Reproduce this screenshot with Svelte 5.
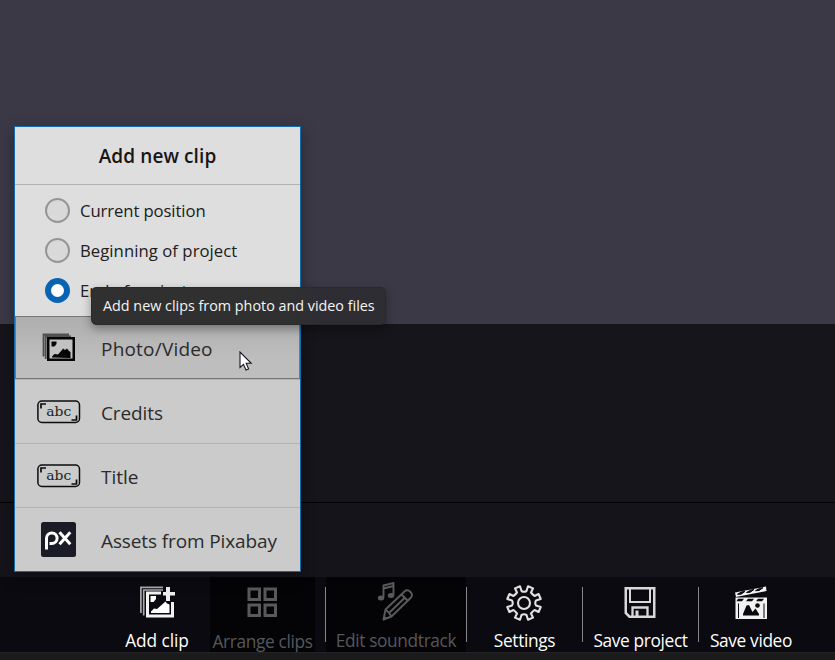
<script>
  const positions = [
    { label: 'Current position', cls: 'current' },
    { label: 'Beginning of project', cls: 'begin' },
    { label: 'End of project', cls: 'end' }
  ];
  let selected = $state(2);

  const sources = [
    { label: 'Photo/Video', icon: 'photo' },
    { label: 'Credits', icon: 'abc' },
    { label: 'Title', icon: 'abc' },
    { label: 'Assets from Pixabay', icon: 'px' }
  ];
</script>

<div class="app">
  <div class="preview"></div>
  <div class="timeline"></div>
  <div class="track"></div>

  <nav class="toolbar">
    <button class="tool add">
      <svg width="36" height="34" viewBox="0 0 36 34">
        <path d="M1.900 28V2.300H24M4.700 30.500V5H24" fill="none" stroke="#a8a8a8" stroke-width="1.700" />
        <path d="M7 6.500H22V9.500H10V29.500H32V17H35V32.500H7Z" fill="#f2f2f2" />
        <path d="M11.500 11h5.500v3l-2.500 3h-3zM12 28v-1.500l3-3 3 .5 8.500-7.500 1.500 2 2.500 1v8.500z" fill="#fff" />
        <path d="M24 7h3V2h4v5h5v3.500h-5v5.500h-4v-5.500h-3z" fill="#eee" />
      </svg>
      <span class="t-add">Add clip</span>
    </button>
    <button class="tool arrange" disabled>
      <svg width="36" height="34" viewBox="0 0 36 34">
        <g fill="none" stroke="#59595c" stroke-width="3">
          <rect x="4" y="4" width="10.500" height="10.500" /><rect x="20" y="4" width="10.500" height="10.500" />
          <rect x="4" y="20" width="10.500" height="10.500" /><rect x="20" y="20" width="10.500" height="10.500" />
        </g>
      </svg>
      <span class="t-arrange">Arrange clips</span>
    </button>
    <i class="sep"></i>
    <button class="tool edit" disabled>
      <svg width="38" height="41" viewBox="0 0 38 41">
        <g fill="none" stroke="#5a5a5d" stroke-width="1.900" stroke-linejoin="round">
          <path d="M6.500 16.500V4.500L16.500 2V14M6.500 7.500L16.500 5" />
          <path d="M8.500 28.500L27.500 10.500Q30.500 8 33.500 11T33.500 17L14.500 35.500L6.500 38.500ZM8.500 28.500Q12 31 14.500 35.500M24.500 13.500L30.500 19.500M12.500 31.500L27.500 17" />
        </g>
        <g fill="#5a5a5d"><ellipse cx="4" cy="17" rx="3.200" ry="2.500" /><ellipse cx="14" cy="14.500" rx="3.200" ry="2.500" /><path d="M6 39.500l1-5 3.500 3z" /></g>
      </svg>
      <span class="t-edit">Edit soundtrack</span>
    </button>
    <i class="sep"></i>
    <button class="tool settings">
      <svg width="36" height="36" viewBox="-18 -18 36 36">
        <g fill="none" stroke="#e2e2e2" stroke-width="2.100" stroke-linejoin="round">
          <path d="M-2.500-12Q0-10.500 2.500-12L4-16.700 9-14.600 7-10.500Q8.500-8.500 10.500-7L14.600-9 16.700-4 12-2.500Q10.500 0 12 2.500L16.700 4 14.600 9 10.500 7Q8.500 8.500 7 10.500L9 14.600 4 16.700 2.500 12Q0 10.500-2.500 12L-4 16.700-9 14.600-7 10.500Q-8.500 8.500-10.500 7L-14.600 9-16.700 4-12 2.500Q-10.500 0-12-2.500L-16.700-4-14.600-9-10.500-7Q-8.500-8.500-7-10.500L-9-14.600-4-16.700Z" />
          <circle r="6" />
        </g>
      </svg>
      <span class="t-settings">Settings</span>
    </button>
    <i class="sep"></i>
    <button class="tool saveproject">
      <svg width="36" height="34" viewBox="0 0 36 34">
        <g fill="none" stroke="#d8d8d8" stroke-width="2.500">
          <path d="M3.750 3.250H32.250V31.750H7.500L3.750 28Z" />
          <path d="M8 3V17H28V3" stroke-width="2" />
          <path d="M10.500 32V22.500H25.500V32" stroke-width="2.300" />
          <path d="M15 25.500V32" stroke-width="3" />
        </g>
      </svg>
      <span class="t-saveproject">Save project</span>
    </button>
    <i class="sep"></i>
    <button class="tool savevideo">
      <svg width="36" height="36" viewBox="0 0 36 36">
        <path d="M2 7.500L33 1.500L33.500 6L3 12Z" fill="#f2f2f2" />
        <path d="M4.500 9.200l4-2.300 3.500-.5-4 2.800zM13.500 7.500l4-2.300 3.500-.7-4 2.800zM22.500 5.700l4-2.300 3.500-.7-4 2.800z" fill="#09090e" stroke="#09090e" />
        <path d="M2.500 12.500H34V34H2.500Z" fill="#f2f2f2" />
        <path d="M5 13.800h6l-2 2.500H3.500zM15 13.800h6l-2 2.500h-6zM25 13.800h6l-2 2.500h-6z" fill="#09090e" />
        <path d="M5.500 18.500V33M31 18.500V33" stroke="#09090e" />
        <path d="M10 30.500V29l3.500-8.500 2.500-.5 3.500 7 3-3.500 3.500 5.500v1.500z" fill="#09090e" />
        <circle cx="24.500" cy="20.500" r="2.300" fill="#09090e" />
      </svg>
      <span class="t-savevideo">Save video</span>
    </button>
  </nav>
  <div class="statusbar"></div>

  <section class="panel">
    <h2><span>Add new clip</span></h2>
    <div class="radios">
      {#each positions as p, i}
        <label>
          <input type="radio" name="position" value={i} bind:group={selected} />
          <span class="dot"></span>
          <span class="text {p.cls}">{p.label}</span>
        </label>
      {/each}
    </div>
    <ul>
      {#each sources as s, i}
        <li class:hover={i === 0}>
          <span class="icon {s.icon}">
            {#if s.icon === 'photo'}
              <svg width="34" height="30" viewBox="0 0 34 30">
                <path d="M1.500 23.500V1.500H27M3.700 26V3.500H29" fill="none" stroke="#505050" stroke-width="1.800" />
                <rect x="6.250" y="5.250" width="25.500" height="21.500" fill="#c2c2c2" stroke="#050505" stroke-width="2.500" />
                <path d="M9.500 8.500h5v2.500l-2 2.500h-3zM10 24.500v-1l2.500-2.500 3.500.5 4-4.500 1-1.500 2 1.500 2-1.500 2 2.500 1.500 1v6z" fill="#050505" />
              </svg>
            {:else if s.icon === 'abc'}
              <svg width="44" height="24" viewBox="0 0 44 24">
                <rect x=".9" y="1" width="41.600" height="21.500" rx="4" fill="none" stroke="#0c0c0c" stroke-width="1.500" />
                <path d="M4 8.500V4H9M34.500 20H39.500V15.500" fill="none" stroke="#0c0c0c" stroke-width="1.700" />
                <text x="9.300" y="15.500" textLength="25" lengthAdjust="spacingAndGlyphs">abc</text>
              </svg>
            {:else}
              <svg width="36" height="36" viewBox="0 0 36 36">
                <rect width="35" height="35" rx="2.500" fill="#191b26" />
                <g fill="none" stroke="#fff" stroke-width="3">
                  <path d="M5.500 27.500V16a5.300 5.300 0 1 1 5.300 5.500H8.500" />
                  <path d="M18.500 10.300L29.300 22.300M29.300 10.300L18.500 22.300" />
                </g>
              </svg>
            {/if}
          </span>
          <span class="name n{i}">{s.label}</span>
        </li>
      {/each}
    </ul>
  </section>

  <div class="tooltip"><span>Add new clips from photo and video files</span></div>

  <svg class="cursor" width="14" height="21" viewBox="0 0 14 21">
    <path d="M1 1V16.500L4.500 13.300L7 19L9.600 17.900L7.200 12.300H12.200Z" fill="#fff" stroke="#17171f" stroke-width="1.100" />
  </svg>
</div>

<style>
  :global(body) { background: #16151c; }
  .app {
    position: relative;
    width: 835px;
    height: 660px;
    overflow: hidden;
    display: flex;
    flex-direction: column;
    font-family: 'Open Sans', 'Noto Sans', sans-serif;
  }
  .app span { white-space: nowrap; }
  .preview { height: 324px; background: #3b3946; }
  .timeline { height: 178px; background: #16151b; border-bottom: 1px solid #000; }
  .track { height: 74px; background: #15141b; }

  .toolbar { display: flex; height: 75px; background: #0a0a10; }
  .tool {
    display: flex;
    flex-direction: column;
    align-items: center;
    justify-content: space-between;
    box-sizing: border-box;
    height: 76px;
    padding: 8px 0 0;
    border: 0;
    background: none;
    color: #fff;
    font: 17.300px/24px 'Open Sans', 'Noto Sans', sans-serif;
    letter-spacing: -.35px;
  }
  .tool svg { flex: none; display: block; }
  .tool:disabled { background: #040407; color: #57575a; }
  .add { width: 106px; margin-left: 104px; }
  .arrange { width: 105px; margin-right: 10px; }
  .edit { width: 140px; padding-top: 4px; }
  .settings, .saveproject { width: 115px; }
  .settings { padding-top: 8px; }
  .settings svg, .saveproject svg { margin-left: -1px; }
  .savevideo { width: 104px; padding-top: 8px; }
  .sep { width: 1px; height: 55px; margin-top: 10px; background: #85858a; }
  .tool span { display: block; }
  .t-add { letter-spacing: -.05px; }
  .t-arrange, .t-edit { letter-spacing: -.35px; }
  .t-arrange { padding-top: 1px; margin-bottom: -1px; }
  .statusbar { position: relative; height: 8px; box-sizing: border-box; background: #1c1b1c; border-top: 1px solid #242426; }

  .panel {
    position: absolute;
    left: 14px;
    top: 126px;
    width: 285px;
    height: 444px;
    border: 1px solid #146bab;
    background: #cbcbcb;
    box-shadow: 0 5px 14px rgba(0, 0, 0, .35);
  }
  h2 {
    display: flex;
    align-items: center;
    justify-content: center;
    height: 57px;
    margin: 0;
    padding-top: 1px;
    box-sizing: border-box;
    background: #dedede;
    color: #161616;
    font-size: 19px;
    font-weight: 600;
    letter-spacing: .1px;
  }
  .radios {
    display: flex;
    flex-direction: column;
    height: 132px;
    box-sizing: border-box;
    padding: 5px 0 0 30px;
    border-top: 1px solid #b2b2b2;
    background: #dedede;
  }
  label { display: flex; align-items: center; flex: none; height: 40px; font-size: 16.700px; letter-spacing: -.1px; color: #202020; }
  input { appearance: none; width: 0; height: 0; margin: 0; }
  .dot { width: 25px; height: 25px; box-sizing: border-box; border: 2px solid #959595; border-radius: 50%; background: #d9d9d9; }
  input:checked + .dot { border: 6px solid #0863b2; background: #fff; }
  .text { margin: 0 0 0 10px; }
  .begin { letter-spacing: .05px; }
  ul { margin: 0; padding: 0; list-style: none; }
  li { display: flex; align-items: center; box-sizing: border-box; height: 64px; border-top: 1px solid #b3b3b3; color: #2b2b2b; }
  li.hover { height: 63px; border: 1px solid #777; background: linear-gradient(#aeaeae, #bebebe 70%); }
  .icon { display: flex; justify-content: center; width: 87px; flex: none; }
  .icon.photo { width: 86px; margin-left: -1px; padding: 1px 0 0 1px; box-sizing: border-box; }
  .icon.px svg { margin-top: 1px; }
  .name { font-size: 19px; padding-top: 3px; margin-left: -1px; }
  .n0 { margin-left: 0; letter-spacing: .2px; }
  .n1, .n3 { letter-spacing: -.12px; }
  text { font: 13px 'DejaVu Serif', serif; fill: #222; }

  .tooltip {
    position: absolute;
    left: 91px;
    top: 287px;
    width: 295px;
    height: 38px;
    display: flex;
    align-items: center;
    padding: 0 0 1px 11px;
    box-sizing: border-box;
    border: 1px solid #292929;
    border-radius: 5px;
    background: linear-gradient(90deg, #303030 65%, #2e2d34 80%);
    box-shadow: 0 4px 10px rgba(0, 0, 0, .35);
    color: #f4f4f4;
    font-size: 14.350px;
  }
  .cursor { position: absolute; left: 239px; top: 351px; }
</style>
